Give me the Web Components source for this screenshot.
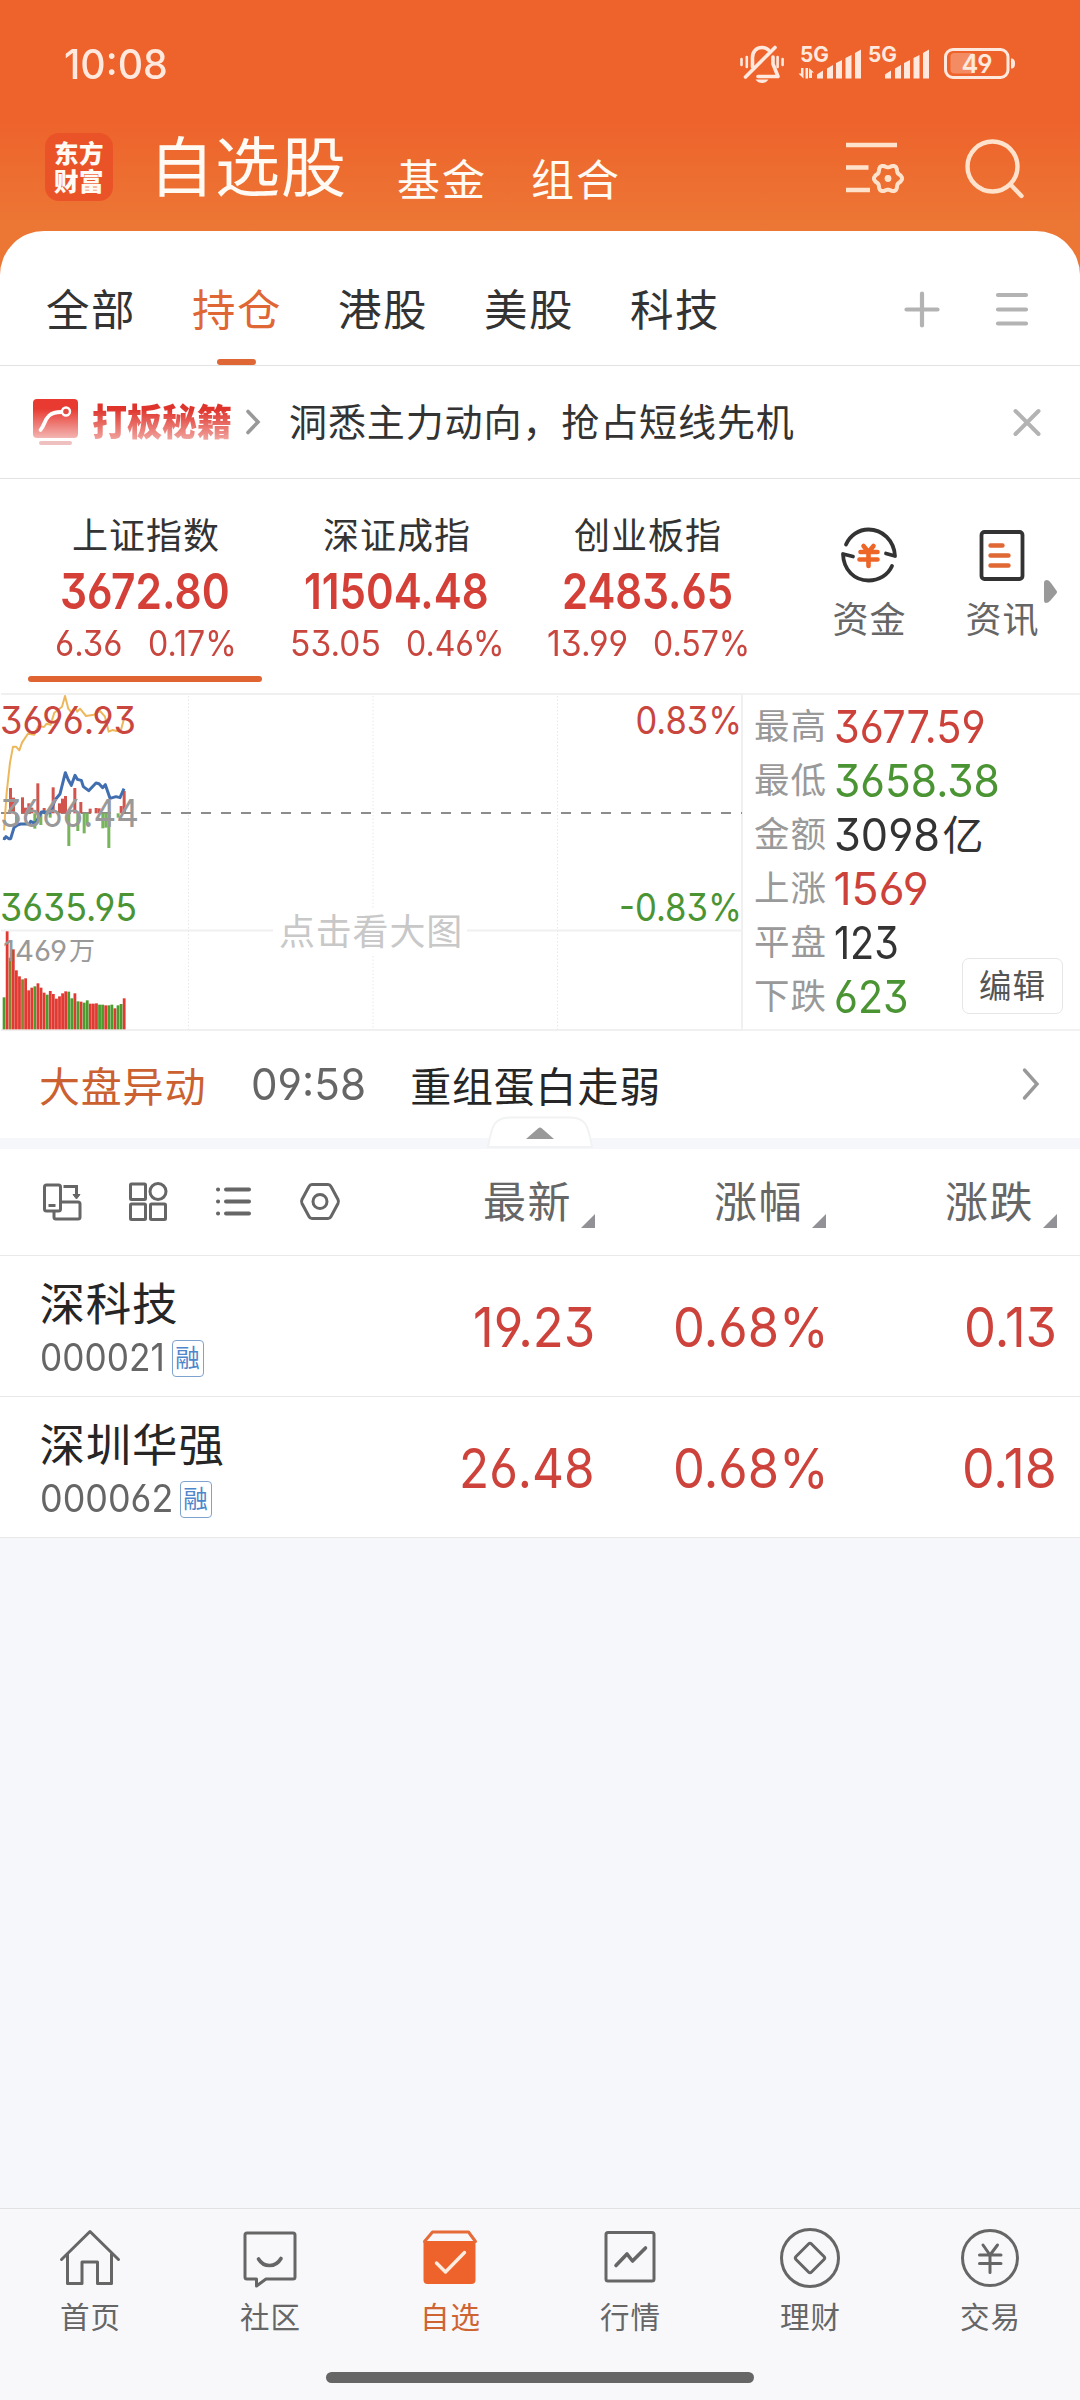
<!DOCTYPE html>
<html lang="zh-CN">
<head>
<meta charset="utf-8">
<title>自选股</title>
<style>
  body {
    margin: 0;
    width: 1080px;
    height: 2400px;
    overflow: hidden;
    background: #f6f7fa;
    color: #333;
    font-family: Inter, "Noto Sans CJK SC", sans-serif;
    font-feature-settings: "cv03", "cv04", "cv09";
  }
</style>
</head>
<body>
<stock-app></stock-app>

<script>
class BaseElement extends HTMLElement {
  constructor() {
    super();
    this.attachShadow({ mode: 'open' });
  }

  connectedCallback() {
    this.shadowRoot.innerHTML = this.getContent();
  }
}

// number squeezed or stretched to a fixed width
class FitNum extends BaseElement {
  connectedCallback() {
    super.connectedCallback();
    const w = Number(this.getAttribute("w"));
    const span = this.shadowRoot.querySelector("span");
    this.style.width = w + "px";
    span.style.transform = `scaleX(${w / span.offsetWidth})`;
  }

  getContent() {
    return `
    <style>
      :host { display: block; white-space: nowrap; }
      span { display: inline-block; transform-origin: 0 50%; }
    </style>
    <span>${this.getAttribute("value")}</span>`;
  }
}
customElements.define("fit-num", FitNum);

class StatusBar extends BaseElement {
  signal(x) {
    return `
      <text x="${x}" y="62" font-size="21.5" font-weight="700" textLength="29" lengthAdjust="spacingAndGlyphs">5G</text>
      <path d="M${x + 17} 78.500v-4l6 -4v8z M${x + 27} 78.500v-10l6 -3.500v13.500z M${x + 36} 78.500v-15.500l6 -3v18.500z M${x + 45.500} 78.500v-20.500l6 -3v23.500z M${x + 55} 78.500v-25.500l6 -3.500v29z"/>`;
  }

  getContent() {
    return `
    <style>
      :host { display: flex; height: 129px; box-sizing: border-box; padding: 42px 64px 0 64px; justify-content: space-between; color: #ffe9de; }
      fit-num { font-size: 40.5px; line-height: 45px; font-weight: 500; }
    </style>
    <fit-num value="10:08" w="104"></fit-num>
    <svg width="276" height="44" viewBox="740 42 276 44" fill="#ffe9de">
      <g fill="none" stroke="#ffe9de" stroke-width="3.600" stroke-linecap="round" stroke-linejoin="round">
        <path d="M752.500 67V57.500c0-6 4-10 9.500-10c3 0 5 1 6.500 2.500M775 47.500L745.500 77M773 57v7l5 12.500h-20"/>
        <path d="M741.500 59v6M746.800 57v10M777.600 57v10M782.600 59v6" stroke-width="2.600"/>
      </g>
      <path d="M755.500 79.500h13c-1.500 2.500-4 3.500-6.500 3.500s-5-1-6.500-3.500z"/>
      <path d="M803.500 68v10.500l-5-5h2.500v-5.500zM809 68l5 4.500h-2v5.500h-3zM805.500 68h2.500v10.500h-2.500z"/>
      ${this.signal(800)}
      ${this.signal(868)}
      <rect x="950.500" y="53" width="25" height="20.500" rx="4" fill="#f48c63"/>
      <rect x="945.500" y="49.500" width="62.500" height="28" rx="7.500" fill="none" stroke="#ffe9de" stroke-width="3"/>
      <path d="M1011 58.500c3 0 4 2 4 5s-1 5-4 5z"/>
      <text x="961.500" y="73" font-size="25" font-weight="600" textLength="31" lengthAdjust="spacingAndGlyphs">49</text>
    </svg>`;
  }
}
customElements.define("status-bar", StatusBar);

class AppHeader extends BaseElement {
  // outline of a six-lobed cog
  gear(cx, cy) {
    let d = "";
    for (let a = 0; a < 360; a += 5) {
      const t = a * Math.PI / 180;
      const r = 12.600 + 1.500 * Math.cos(6 * t);
      d += `${a ? "L" : "M"}${(cx + r * Math.cos(t)).toFixed(1)} ${(cy + r * Math.sin(t)).toFixed(1)}`;
    }
    return d + "z";
  }

  getContent() {
    return `
    <style>
      :host { display: block; height: 285px; background: linear-gradient(#ee622b 0 115px, #ec7735 228px); color: #fffaf3; }
      .bar { display: flex; align-items: flex-start; padding-left: 45px; }
      .logo { width: 68px; height: 68px; margin-top: 4px; box-sizing: border-box; padding: 8px 0 0 9px; border-radius: 14px; background: #ea5328; font-size: 24.5px; line-height: 27.5px; font-weight: 900; letter-spacing: .5px; white-space: nowrap; }
      .main { margin-left: 36px; width: 206px; font-size: 65px; line-height: 80px; letter-spacing: 1px; margin-top: -1px; white-space: nowrap; }
      .sub { margin-left: 44px; width: 90px; font-size: 43px; line-height: 50px; letter-spacing: 2px; margin-top: 26px; white-space: nowrap; }
      .main + .sub { margin-left: 42px; }
      .filter { margin: 12px 0 0 223px; }
      .search { margin: 10px 0 0 59px; }
    </style>
    <status-bar></status-bar>
    <div class="bar">
      <div class="logo">东方<br>财富</div>
      <div class="main">自选股</div>
      <div class="sub">基金</div>
      <div class="sub">组合</div>
      <svg class="filter" width="62" height="62" viewBox="844 141 62 62" fill="none" stroke="#ffe2cc" stroke-width="4.600">
        <path d="M846 145h51M846 167.500h22.500M846 190h24"/>
        <path stroke-width="4" stroke-linejoin="round" d="${this.gear(888, 178.500)}"/>
        <circle cx="888" cy="178.500" r="3.400" fill="#ffe2cc" stroke="none"/>
      </svg>
      <svg class="search" width="62" height="62" viewBox="965 137 62 62" fill="none" stroke="#ffe2cc" stroke-width="4.400" stroke-linecap="round">
        <circle cx="992.500" cy="164.500" r="25"/>
        <path d="M1011 183l10.500 11"/>
      </svg>
    </div>`;
  }
}
customElements.define("app-header", AppHeader);

class GroupTabs extends BaseElement {
  getContent() {
    const tabs = ["全部", "持仓", "港股", "美股", "科技"];
    return `
    <style>
      :host { display: flex; height: 135px; box-sizing: border-box; padding-left: 45px; border-bottom: 1px solid #e2e2e2; }
      .tab { width: 146px; box-sizing: border-box; padding-top: 47px; font-size: 43.500px; line-height: 64px; letter-spacing: 1.500px; text-indent: 1px; display: flex; flex-direction: column; }
      .on { color: #df6735; }
      .on::after { content: ""; width: 39px; height: 6px; border-radius: 3px; background: #df6735; margin: 17px 0 0 26px; }
      svg { margin-top: 58px; }
      .plus { margin-left: 126px; }
      .menu { margin-left: 52px; }
    </style>
    ${tabs.map(t => `<div class="tab ${t === "持仓" ? "on" : ""}">${t}</div>`).join("")}
    <svg class="plus" width="42" height="42" stroke="#b3b3b3" stroke-width="4.200" stroke-linecap="round"><path d="M5.500 20.500h31M21 4.500v32"/></svg>
    <svg class="menu" width="42" height="42" stroke="#b3b3b3" stroke-width="4.200" stroke-linecap="round"><path d="M3 6h28M3 20.500h28M3 34.500h28"/></svg>`;
  }
}
customElements.define("group-tabs", GroupTabs);

class PromoRow extends BaseElement {
  getContent() {
    return `
    <style>
      :host { display: flex; height: 113px; box-sizing: border-box; align-items: center; padding: 0 37px 0 32px; border-bottom: 1px solid #e2e2e2; }
      .tag { margin-left: 13px; font-size: 35px; line-height: 40px; font-weight: 900; background: linear-gradient(#df342c 20%, #f2a9a4 95%); -webkit-background-clip: text; color: transparent; transform: scaleY(1.06); }
      .text { flex: 1; margin-left: 26px; font-size: 38px; line-height: 50px; letter-spacing: .9px; }
      .go { margin-left: 11px; }
    </style>
    <svg width="47" height="52" viewBox="32 396 47 52">
      <defs><linearGradient id="g" x2="0" y2="1"><stop offset=".25" stop-color="#e83a31"/><stop offset="1" stop-color="#f3b5b2"/></linearGradient></defs>
      <rect x="33" y="399" width="45" height="39" rx="4" fill="url(#g)"/>
      <rect x="39" y="441" width="33" height="4" rx="2" fill="#efc0c0"/>
      <path d="M40.500 430c6-6 3-18 21-18" fill="none" stroke="#fff" stroke-width="3.800" stroke-linecap="round"/>
      <circle cx="66" cy="411.500" r="4" fill="#e24a42" stroke="#fff" stroke-width="2.400"/>
    </svg>
    <span class="tag">打板秘籍</span>
    <svg class="go" width="20" height="30" fill="none" stroke="#999" stroke-width="3.600" stroke-linecap="round"><path d="M5 4.500l10 10.500l-10 10.500"/></svg>
    <span class="text">洞悉主力动向，抢占短线先机</span>
    <svg width="32" height="32" stroke="#b3b3b3" stroke-width="4" stroke-linecap="round"><path d="M4.500 5l23 23M27.500 5l-23 23"/></svg>`;
  }
}
customElements.define("promo-row", PromoRow);

class IndexCard extends BaseElement {
  getContent() {
    const [value, vw] = this.getAttribute("value").split("|");
    const [diff, dw] = this.getAttribute("diff").split("|");
    const [rate, rw] = this.getAttribute("rate").split("|");
    return `
    <style>
      :host { display: flex; flex-direction: column; align-items: center; width: 234px; margin-right: 17px; color: #c9463f; }
      .name { color: #333; font-size: 36px; line-height: 44px; letter-spacing: 1px; text-indent: 2px; margin-top: 35px; }
      .value { font-size: 50px; line-height: 50px; font-weight: 600; color: #d43f37; margin-top: 8px; }
      .sub { display: flex; gap: 25px; padding-left: 2px; font-size: 35px; line-height: 40px; margin-top: 7px; }
      .line { width: 234px; height: 6px; border-radius: 3px; margin-top: 13px; }
      :host([active]) .line { background: #e06431; }
    </style>
    <div class="name"><slot></slot></div>
    <fit-num class="value" value="${value}" w="${vw}"></fit-num>
    <div class="sub"><fit-num value="${diff}" w="${dw}"></fit-num><fit-num value="${rate}" w="${rw}"></fit-num></div>
    <div class="line"></div>`;
  }
}
customElements.define("index-card", IndexCard);

class IndexStrip extends BaseElement {
  getContent() {
    return `
    <style>
      :host { display: flex; height: 214px; padding-left: 28px; }
      .entry { display: flex; flex-direction: column; align-items: center; width: 133px; padding-top: 45px; font-size: 36px; line-height: 44px; letter-spacing: 1px; text-indent: 2px; color: #666; }
      .entry svg { margin-bottom: 12px; }
      .first { margin-left: 21px; }
      .more { margin: 100px 0 0 -24px; }
    </style>
    <index-card active value="3672.80|170" diff="6.36|68" rate="0.17%|89">上证指数</index-card>
    <index-card value="11504.48|185" diff="53.05|91" rate="0.46%|98">深证成指</index-card>
    <index-card value="2483.65|171" diff="13.99|81" rate="0.57%|97">创业板指</index-card>
    <div class="entry first">
      <svg width="62" height="62" viewBox="838 524 62 62" fill="none" stroke="#333" stroke-width="3.800" stroke-linecap="round" stroke-linejoin="round">
        <path d="M846 544.500c4-9 12.500-15 22.500-15c14 0 25.500 11 26.500 26.500l-9-2.500M892 566c-4 9-13 14.500-23.500 14.500c-14 0-25-10.500-25.500-26.500l10 2.500"/>
        <path stroke="#ee6528" stroke-width="4.600" d="M863.500 546l5 6l5-6M860.500 552h17M859.500 559.500h18M868.500 552v14"/>
      </svg>
      资金
    </div>
    <div class="entry">
      <svg width="62" height="62" viewBox="971 524 62 62" fill="none" stroke="#333" stroke-width="3.800" stroke-linecap="round">
        <rect x="981.500" y="532" width="41" height="47" rx="3"/>
        <path stroke="#e06835" stroke-width="4.400" d="M990.500 545.500h12M990.500 555.500h18M990.500 565.500h18"/>
      </svg>
      资讯
    </div>
    <svg class="more" width="14" height="26"><path fill="#999" d="M0 4q0-3 3-3q2 0 4 3l5 7q2 2 0 4l-6 7q-2 2-4 2q-2 0-2-3z"/></svg>`;
  }
}
customElements.define("index-strip", IndexStrip);

// curve and bar points are on a grid three times finer than the chart box
const AVG = "12,453 20,340 30,250 39,202 48,202 58,213 66,190 84,163 103,166 115,140 132,143 140,133 152,136 163,100 186,82 195,50 205,88 215,100 225,84 232,97 240,88 258,110 282,106 300,95 315,112 326,157 338,152 350,155 362,155 372,118";
const PRICE = "9,477 14,478 18,472 26,478 32,478 42,445 52,437 62,434 88,434 92,426 100,430 108,430 124,398 132,397 138,403 144,396 150,400 162,370 168,358 180,344 196,280 205,302 214,318 225,288 232,300 244,303 250,322 266,334 288,311 297,313 308,325 316,316 330,357 348,352 360,355 372,328";
const UP = [[31,326],[40,355],[67,354],[76,385],[86,372],[95,385],[113,312],[132,386],[159,324],[178,372],[187,358],[196,350],[224,326],[242,368],[270,388],[288,386],[297,387],[363,380],[372,335]];
const DOWN = [[49,430],[104,448],[122,437],[150,415],[206,500],[233,455],[252,462],[261,437],[308,447],[317,445],[326,506],[354,415]];
const VOLUME = "954g 756r 835o 810r 873r 891r 900o 897r 933r 925r 921g 912r 925r 940r 946g 935r 944r 958r 951r 942r 936r 937g 957g 942r 966g 967r 970g 963g 973r 973r 972r 976g 976g 978r 978g 976g 987r 978g 974g 957r";

class MinuteChart extends BaseElement {
  bars() {
    const colors = { r: "#e03a33", g: "#4b9b2e", o: "#858530" };
    const up = UP.map(([x, y]) => `<rect x="${x - 4}" y="${y}" width="9" height="${402 - y}" fill="#d1554d"/>`);
    const down = DOWN.map(([x, y]) => `<rect x="${x - 4}" y="402" width="9" height="${y - 402}" fill="#78b45c"/>`);
    const vol = VOLUME.split(" ").map((v, i) => {
      const y = parseInt(v);
      return `<rect x="${8 + i * 9.24}" y="${y}" width="8.400" height="${1050 - y}" fill="${colors[v.slice(-1)]}"/>`;
    });
    return up.concat(down, vol).join("");
  }

  getContent() {
    return `
    <style>:host { display: block; width: 743px; height: 338px; } svg { display: block; overflow: visible; }</style>
    <svg width="743" height="338" fill="none">
      <path d="M1 1h742M1 337h742M742 1v336M1 237.500h272M467 237.500h275" stroke="#f0f0f0" stroke-width="2"/>
      <path d="M188.500 3v334M373 3v213M373 263v74M557.500 3v334" stroke="#e8e8e8" stroke-width="1" stroke-dasharray="1.500 2"/>
      <path d="M1 120h741" stroke="#8c8c8c" stroke-width="2" stroke-dasharray="10 10"/>
      <g transform="scale(.33333) translate(0 -41)">
        ${this.bars()}
        <polyline points="${AVG}" stroke="#edb85c" stroke-width="6" stroke-linejoin="round"/>
        <polyline points="${PRICE}" stroke="#406eb0" stroke-width="9" stroke-linejoin="round"/>
      </g>
      <g font-size="37.500">
        <text x="0" y="41" fill="#c9463f" textLength="136" lengthAdjust="spacingAndGlyphs">3696.93</text>
        <text x="0" y="134" fill="#999" textLength="139" lengthAdjust="spacingAndGlyphs">3666.44</text>
        <text x="0" y="227.500" fill="#4b9434" textLength="137" lengthAdjust="spacingAndGlyphs">3635.95</text>
        <text x="635.500" y="41" fill="#c9463f" textLength="106.500" lengthAdjust="spacingAndGlyphs">0.83%</text>
        <text x="619" y="227.500" fill="#4b9434" textLength="123" lengthAdjust="spacingAndGlyphs">-0.83%</text>
      </g>
      <text x="3" y="267.500" font-size="29" fill="#999" textLength="64" lengthAdjust="spacingAndGlyphs">1469</text>
      <text x="69" y="267" font-size="26" fill="#999">万</text>
      <text x="279" y="251.500" font-size="36" fill="#c8c8c8" letter-spacing=".8">点击看大图</text>
    </svg>`;
  }
}
customElements.define("minute-chart", MinuteChart);

class MarketStats extends BaseElement {
  getContent() {
    const rows = [
      ["最高", "3677.59", 152, "up"],
      ["最低", "3658.38", 166, "down"],
      ["金额", "3098", 106, "", "亿"],
      ["上涨", "1569", 95, "up"],
      ["平盘", "123", 65, ""],
      ["下跌", "623", 75, "down"],
    ];
    return `
    <style>
      :host { display: block; position: relative; flex: 1; box-sizing: border-box; height: 338px; padding: 5px 0 0 11px; border-top: 2px solid #f2f2f2; border-bottom: 2px solid #f2f2f2; }
      .row { display: flex; height: 54px; line-height: 54px; }
      .label { font-size: 35.500px; letter-spacing: 1px; width: 79.500px; color: #999; }
      fit-num { font-size: 44.500px; }
      .up { color: #cc423a; }
      .down { color: #4b9434; }
      .unit { font-size: 41px; margin-left: 3px; }
      .edit { position: absolute; right: 17px; top: 263px; width: 101px; height: 56px; box-sizing: border-box; border: 1px solid #e6e6e6; border-radius: 7px; background: #fff; color: #555; font-size: 32.500px; letter-spacing: 1px; line-height: 55px; text-align: center; }
    </style>
    ${rows.map(([label, value, w, cls, unit]) => `
      <div class="row"><span class="label">${label}</span><fit-num class="${cls}" value="${value}" w="${w}"></fit-num>${unit ? `<span class="unit">${unit}</span>` : ""}</div>`).join("")}
    <div class="edit">编辑</div>`;
  }
}
customElements.define("market-stats", MarketStats);

class NewsRow extends BaseElement {
  getContent() {
    return `
    <style>
      :host { display: flex; position: relative; height: 118px; box-sizing: border-box; align-items: center; padding: 0 40px 1px 39px; border-bottom: 11px solid #f6f7fa; font-size: 41px; letter-spacing: .8px; }
      .tag { color: #cb6030; }
      fit-num { margin-left: 45px; color: #666; font-size: 44px; letter-spacing: 0; }
      .text { margin-left: 44px; color: #262626; flex: 1; }
      .fold { position: absolute; left: 487px; top: 85px; }
    </style>
    <span class="tag">大盘异动</span>
    <fit-num value="09:58" w="115"></fit-num>
    <span class="text">重组蛋白走弱</span>
    <svg width="20" height="36" fill="none" stroke="#999" stroke-width="3.400" stroke-linecap="round"><path d="M4.500 4l12.500 14l-12.500 14"/></svg>
    <svg class="fold" width="106" height="33">
      <path d="M1 31C5 8 8 2 22 1.500H84C98 2 101 8 105 31z" fill="#fff" stroke="#f1f2f3" stroke-width="2"/>
      <path d="M39 23L51 12.500q2-2 4 0L67 23z" fill="#999"/>
    </svg>`;
  }
}
customElements.define("news-row", NewsRow);

class QuoteToolbar extends BaseElement {
  getContent() {
    return `
    <style>
      :host { display: flex; height: 107px; box-sizing: border-box; align-items: center; padding: 0 23px 0 41px; border-bottom: 1px solid #e9e9e9; color: #666; }
      .icons { flex: 1; display: flex; gap: 44px; }
      .col { display: flex; width: 231px; justify-content: flex-end; align-items: flex-end; font-size: 43px; line-height: 52px; letter-spacing: 1.500px; }
      .col svg { margin-left: 9px; }
      .icons svg { fill: none; stroke: #666; stroke-width: 3; }
    </style>
    <div class="icons">
      <svg width="42" height="42">
        <path d="M5.500 4h12q2 0 2 2v22q0 2-2 2h-12q-2 0-2-2v-22q0-2 2-2z"/>
        <path d="M7.500 24.500h7M22.500 5.500h13v8M20 21h17q2 0 2 2v13q0 2-2 2h-22q-2 0-2-2v-5"/>
        <path d="M32 13.500h7l-3.500 4.500z" fill="#666" stroke-width="1"/>
      </svg>
      <svg width="42" height="42">
        <rect x="3.500" y="3" width="15" height="15.500" rx="1"/><circle cx="31" cy="10.500" r="8"/>
        <rect x="3.500" y="23" width="15" height="15.500" rx="1"/><rect x="23.500" y="23" width="15" height="15.500" rx="1"/>
      </svg>
      <svg width="42" height="42" stroke-linecap="round" style="stroke-width:4"><path d="M5 8.500h.1M5 20.500h.1M5 32.500h.1M13 8.500h23M13 20.500h23M13 32.500h23"/></svg>
      <svg width="42" height="42" stroke-linejoin="round">
        <path d="M13 3.500h16q2 0 3 2l7 13q1 2 0 4l-7 13q-1 2-3 2h-16q-2 0-3-2l-7-13q-1-2 0-4l7-13q1-2 3-2z"/><circle cx="21" cy="20.500" r="7"/>
      </svg>
    </div>
    ${["最新", "涨幅", "涨跌"].map(t => `<div class="col">${t}<svg width="14" height="14"><path d="M14 0v14H0z" fill="#919196"/></svg></div>`).join("")}`;
  }
}
customElements.define("quote-toolbar", QuoteToolbar);

class QuoteRow extends BaseElement {
  getContent() {
    const [code, cw] = this.getAttribute("code").split("|");
    const cells = this.getAttribute("cells").split(" ").map(c => c.split("|"));
    return `
    <style>
      :host { display: flex; height: 141px; box-sizing: border-box; align-items: center; padding: 2px 23px 0 39.500px; border-bottom: 1px solid #e8e8e8; background: #fff; }
      .stock { flex: 1; padding-top: 6px; }
      .name { font-size: 45.500px; line-height: 56px; letter-spacing: .8px; color: #262626; white-space: nowrap; }
      .code { display: flex; align-items: center; font-size: 37.500px; line-height: 50px; color: #666; }
      .badge { margin-left: 7px; width: 32px; height: 37px; box-sizing: border-box; border: 1.500px solid #7ea3cf; border-radius: 4px; color: #4d86cb; font-size: 24.500px; line-height: 34px; text-align: center; }
      .cell { display: flex; width: 231px; justify-content: flex-end; font-size: 54.500px; color: #cd433b; }
      .rate fit-num { margin-right: -3px; }
    </style>
    <div class="stock">
      <div class="name"><slot></slot></div>
      <div class="code"><fit-num value="${code}" w="${cw}"></fit-num><span class="badge">融</span></div>
    </div>
    ${cells.map(([v, w]) => `<div class="cell ${v.endsWith("%") ? "rate" : ""}"><fit-num value="${v}" w="${w}"></fit-num></div>`).join("")}`;
  }
}
customElements.define("quote-row", QuoteRow);

class NavItem extends BaseElement {
  getContent() {
    return `
    <style>
      :host { display: flex; flex-direction: column; align-items: center; width: 180px; padding-top: 16px; color: #666; font-size: 29.500px; line-height: 36px; letter-spacing: 1px; text-indent: 1px; }
      :host([active]) { color: #cf6433; }
      .icon { height: 66px; margin-bottom: 8px; }
    </style>
    <div class="icon"><slot name="icon"></slot></div>
    <slot></slot>`;
  }
}
customElements.define("nav-item", NavItem);

class BottomNav extends BaseElement {
  getContent() {
    return `
    <style>
      :host { display: block; height: 192px; box-sizing: border-box; border-top: 1px solid #e0e1e4; background: #f8f8fb; }
      nav { display: flex; height: 163px; }
      svg { display: block; fill: none; stroke: #666; stroke-width: 3; stroke-linecap: round; stroke-linejoin: round; }
      .home { width: 428px; height: 11px; margin: 0 auto; border-radius: 6px; background: #666; }
    </style>
    <nav>
      <nav-item><svg slot="icon" width="66" height="66"><path d="M4.500 34.500L33 6.500l28.500 28M10.500 29v29.500h14.500V37h15.500v21.500h14V29"/></svg>首页</nav-item>
      <nav-item><svg slot="icon" width="66" height="66"><path d="M10 8h46q2 0 2 2v42q0 2-2 2H29l-9.500 7v-7H10q-2 0-2-2v-42q0-2 2-2z"/><path stroke-width="3.600" d="M21.500 34c5 8.500 17 9 22.500-.5"/></svg>社区</nav-item>
      <nav-item active><svg slot="icon" width="66" height="66">
        <path d="M6.500 16v39q0 4 4 4h44q4 0 4-4v-39z" fill="#ee622b" stroke="none"/>
        <path d="M7.500 16.500L15.500 7h36l7 9.500" stroke="#e56b38"/>
        <path stroke="#ffece0" stroke-width="3.400" d="M19.500 38l9 9l19-19.500"/></svg>自选</nav-item>
      <nav-item><svg slot="icon" width="66" height="66"><rect x="9" y="7.500" width="48" height="48.500" rx="2"/><path stroke-width="3.600" d="M19 40.500l11-11.500l5.500 7L48.500 23"/></svg>行情</nav-item>
      <nav-item><svg slot="icon" width="66" height="66"><circle cx="33" cy="33" r="28.500"/><path d="M31.500 19q1.500-1.500 3 0l12.500 12.500q1.500 1.500 0 3L34.500 47q-1.500 1.500-3 0L19 34.500q-1.500-1.500 0-3z"/></svg>理财</nav-item>
      <nav-item><svg slot="icon" width="66" height="66"><circle cx="33" cy="33" r="27.500"/><path d="M26 20l7 10l7.500-10M22.500 30h21.500M22.500 38.500h21.500M33 30v17.500"/></svg>交易</nav-item>
    </nav>
    <div class="home"></div>`;
  }
}
customElements.define("bottom-nav", BottomNav);

class StockApp extends BaseElement {
  getContent() {
    return `
    <style>
      :host { display: flex; flex-direction: column; width: 1080px; height: 2400px; }
      .panel { background: #fff; border-radius: 44px 44px 0 0; margin-top: -54px; }
      .market { display: flex; }
      .blank { flex: 1; }
    </style>
    <app-header></app-header>
    <div class="panel">
      <group-tabs></group-tabs>
      <promo-row></promo-row>
      <index-strip></index-strip>
      <div class="market">
        <minute-chart></minute-chart>
        <market-stats></market-stats>
      </div>
      <news-row></news-row>
      <quote-toolbar></quote-toolbar>
      <quote-row code="000021|125" cells="19.23|122 0.68%|156 0.13|93">深科技</quote-row>
      <quote-row code="000062|133" cells="26.48|136 0.68%|156 0.18|95">深圳华强</quote-row>
    </div>
    <div class="blank"></div>
    <bottom-nav></bottom-nav>`;
  }
}
customElements.define("stock-app", StockApp);
</script>
</body>
</html>
